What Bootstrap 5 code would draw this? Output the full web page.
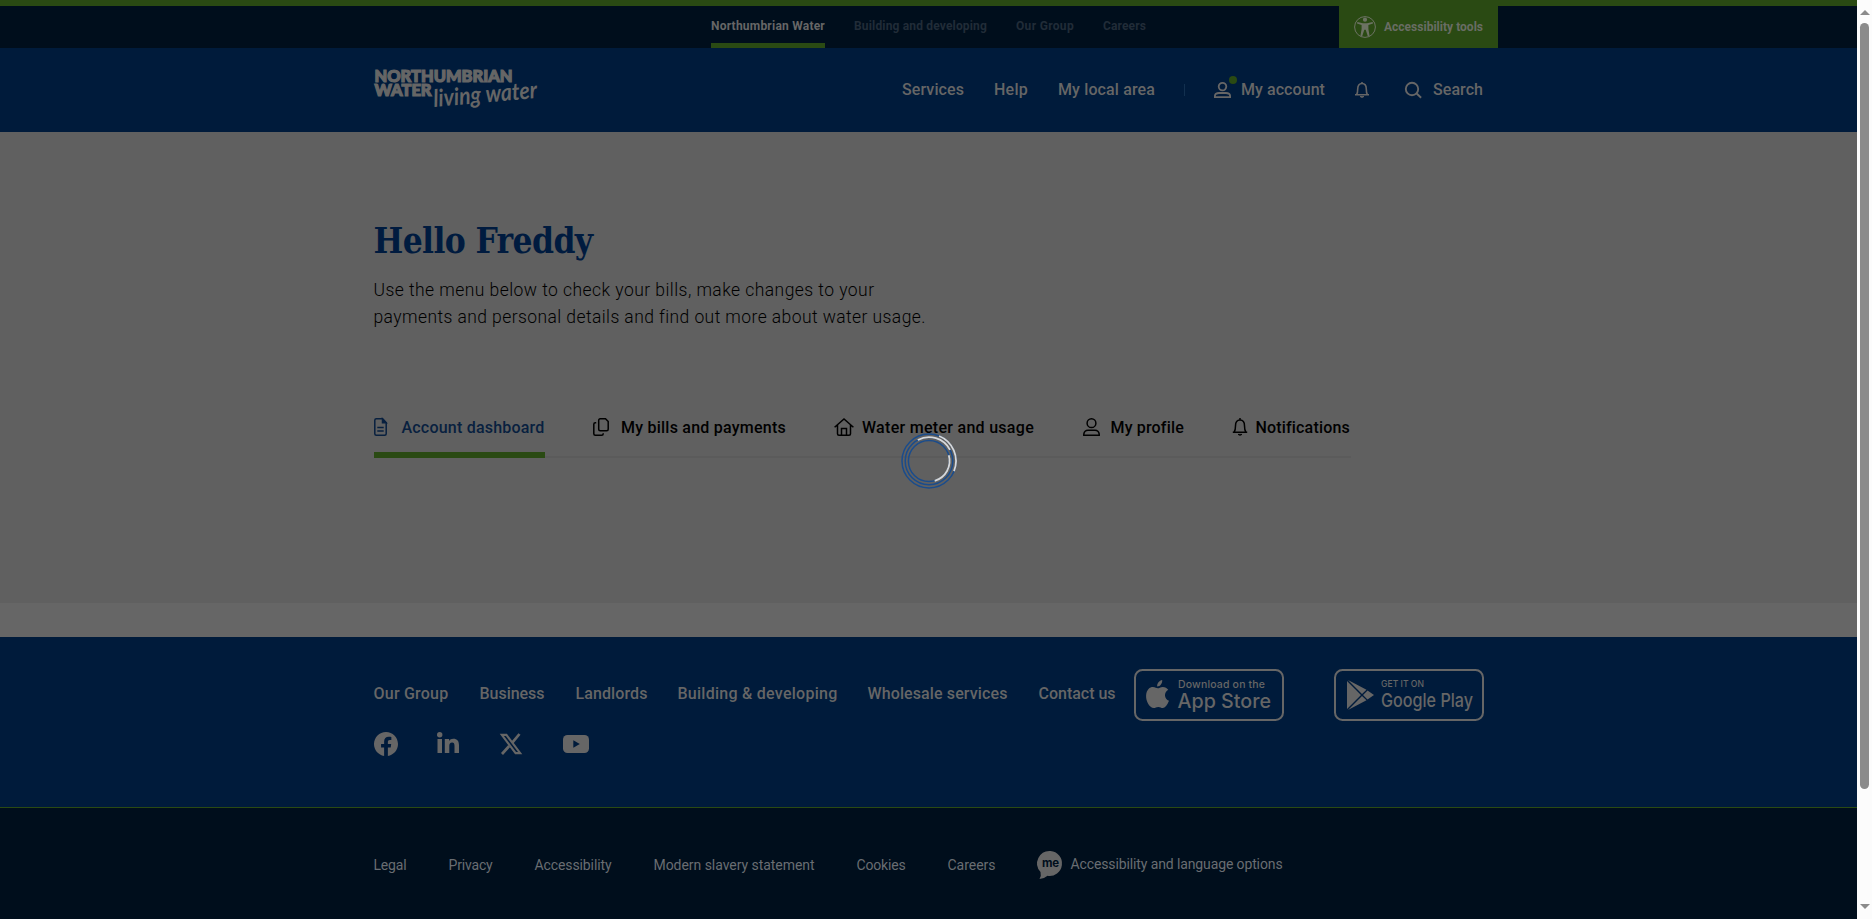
<!DOCTYPE html>
<html lang="en">
<head>
<meta charset="utf-8">
<meta name="viewport" content="width=device-width, initial-scale=1">
<title>Your account | Northumbrian Water</title>
<link href="https://cdn.jsdelivr.net/npm/bootstrap@5.3.0/dist/css/bootstrap.min.css" rel="stylesheet">
<style>
:root{--green:#2a4a13;--navy:#001b3b;--ink:#000e1c;--soft:#666}
html,body{height:919px;overflow:hidden}
body{font-family:Roboto,"Liberation Sans",sans-serif;font-size:16px;line-height:1.5;background:#666;color:#000}
a{color:inherit;text-decoration:none}
svg{display:block;flex:none;overflow:visible}
.page-col{width:1857px;height:919px;flex:none}
.wrap{width:1110px;margin-left:373.5px}
[data-w]{display:inline-block;white-space:nowrap}
.topbar{height:48px;background:var(--ink);border-top:6px solid var(--green);font-size:12px;font-weight:700}
.topbar nav{margin-left:711px;gap:29px;color:#212c38}
.topbar nav a{height:42px;line-height:40px}
.topbar nav a.active{color:var(--soft);border-bottom:5px solid var(--green)}
.tools{width:159px;height:42px;margin-left:193px;padding-left:15px;gap:8px;background:var(--green);color:#696d64}
.masthead{height:84px;background:var(--navy);color:var(--soft);font-weight:500}
.masthead .wrap{height:84px}
.sep{width:1px;height:12px;background:#12304f}
.dot{position:absolute;left:15px;top:-6px;width:8px;height:8px;border-radius:50%;background:var(--green)}
.hero{height:471px;background:#606060}
h1{font-family:"DejaVu Serif Condensed","DejaVu Serif",serif;font-stretch:condensed;font-size:35px;font-weight:700;line-height:42px;color:#001b3f;padding-top:88px;margin:0}
.intro{font-size:17.5px;font-weight:300;line-height:27px;margin-top:15px}
.tabs{width:977px;height:60px;margin-top:67px;border-bottom:2px solid #5b5b5b;font-weight:500}
.tabs a{height:60px;padding-top:18px;padding-bottom:9px}
.tabs a.active{color:#08203f;border-bottom:6px solid var(--green)}
.spin{position:absolute;left:901px;top:432.5px}
.foot{height:170px;margin-top:34px;background:var(--navy);color:var(--soft);font-weight:500}
.legal{height:112px;background:var(--ink);border-top:1px solid var(--green);color:#696d72;font-size:14px}
.legal a{line-height:20px}
.scroll-track{width:15px;background:#fcfcfc}
.thumb{width:9px;height:766px;border-radius:5px;background:#8b8b8b}
</style>
</head>
<body class="d-flex">
<div class="page-col">
  <header>
    <div class="topbar d-flex">
      <nav class="d-flex">
        <a class="active" href="#" data-w="114">Northumbrian Water</a>
        <a href="#" data-w="133">Building and developing</a>
        <a href="#" data-w="58">Our Group</a>
        <a href="#" data-w="43">Careers</a>
      </nav>
      <a href="#" class="tools d-flex align-items-center">
        <svg width="22" height="22" viewBox="0 0 22 22"><circle cx="11" cy="11" r="10.4" fill="none" stroke="#6c7263" stroke-width="1"/><g fill="#6c7263"><circle cx="11" cy="3.7" r="2.1"/><path d="M3.3 6.1 9 7.2h4l5.7-1.1.3 1.5-4.6 1.3v4l1.2 7-1.8.4-2.1-6.5h-1.4l-2.1 6.5-1.8-.4 1.2-7v-4L3 7.600z"/></g></svg>
        <span data-w="99">Accessibility tools</span>
      </a>
    </div>
    <div class="masthead">
      <div class="wrap d-flex align-items-center">
        <svg width="166" height="46" viewBox="0 0 166 46" fill="#666">
          <g font-family="Lato" font-weight="900" font-size="16" stroke="#666" stroke-width="1.200">
            <text x=".5" y="15" textLength="138" lengthAdjust="spacingAndGlyphs">NORTHUMBRIAN</text>
            <text x=".5" y="29" textLength="57" lengthAdjust="spacingAndGlyphs">WATER</text>
          </g>
          <text x="60" y="40" font-family="Lato" font-style="italic" font-weight="700" font-size="24" textLength="104" lengthAdjust="spacingAndGlyphs" transform="rotate(-5 60 40)">living water</text>
        </svg>
        <nav class="d-flex align-items-center" style="margin-left:362.500px">
          <a href="#" data-w="62">Services</a>
          <a href="#" data-w="34" style="margin-left:30px">Help</a>
          <a href="#" data-w="97" style="margin-left:30px">My local area</a>
          <span class="sep" style="margin-left:29px"></span>
          <a href="#" class="d-flex align-items-center" style="margin-left:29px">
            <span class="position-relative"><svg width="17" height="16" viewBox="0 0 17 16" fill="none" stroke="#666" stroke-width="1.8"><circle cx="8.500" cy="4.600" r="3.800"/><path d="M.9 15.100v-1.300Q1.200 11 5 11h7q3.800 0 4.100 2.800v1.300z"/></svg><span class="dot"></span></span>
            <span data-w="84" style="margin-left:10px">My account</span>
          </a>
          <a href="#" aria-label="Notifications" style="margin-left:30px"><svg width="14" height="16" viewBox="0 0 14 16" fill="none" stroke="#666" stroke-width="1.600"><path d="M7 0v1.500M0 12.700h14M1.700 12.300Q2.700 11 2.700 7c0-3.500 1.500-5.500 4.300-5.500s4.300 2 4.300 5.500q0 4 1 5.300"/><path d="M5 14.500q2 1.800 4 0z" fill="#666" stroke-width=".8"/></svg></a>
          <a href="#" class="d-flex align-items-center" style="margin-left:36px"><svg width="17" height="16" viewBox="0 0 17 16" fill="none" stroke="#666" stroke-width="1.900"><circle cx="7" cy="7" r="6.200"/><path d="m11.400 11.200 4.700 4.500"/></svg><span data-w="50" style="margin-left:11px">Search</span></a>
        </nav>
      </div>
    </div>
  </header>

  <main class="hero">
    <div class="wrap">
      <h1><span data-w="219">Hello Freddy</span></h1>
      <p class="intro mb-0"><span data-w="501">Use the menu below to check your bills, make changes to your</span><br><span data-w="552">payments and personal details and find out more about water usage.</span></p>
      <div class="tabs d-flex">
        <a class="active d-flex" href="#"><svg width="13" height="18" viewBox="0 0 13 18" style="margin-top:2px" fill="none" stroke="#08203f" stroke-width="1.500"><path d="M8.500.8H2.300Q.8.800.8 2.300v13.400q0 1.500 1.500 1.500h8.400q1.500 0 1.500-1.500V4.800z"/><path d="M8.500.8v4h3.700z" fill="#08203f"/><path d="M3.300 9.500h6.400M3.300 13h6.400"/></svg><span data-w="143" style="margin-left:15px">Account dashboard</span></a>
        <a class="d-flex" href="#" style="margin-left:48px"><svg width="16" height="18" viewBox="0 0 16 18" style="margin-top:2px" fill="none" stroke="#000" stroke-width="1.500"><path d="M7.200.8h5.300l2.700 2.700v7.800q0 1.500-1.500 1.500H7.200q-1.500 0-1.500-1.500v-9Q5.700.8 7.200.8zM3.200 4.800h-.9Q.8 4.800.8 6.300v9.400q0 1.500 1.500 1.500h6.400q1.500 0 1.500-1.500v-.5"/></svg><span data-w="165" style="margin-left:12.500px">My bills and payments</span></a>
        <a class="d-flex" href="#" style="margin-left:48px"><svg width="20" height="18" viewBox="0 0 20 18" style="margin-top:2px" fill="none" stroke="#000" stroke-width="1.500"><path d="M.6 9.200 10 .9l9.400 8.300M3.500 6.800v8.900q0 1.500 1.500 1.500h10q1.500 0 1.500-1.500V6.800M7.500 17v-6.500h5V17"/></svg><span data-w="172" style="margin-left:8px">Water meter and usage</span></a>
        <a class="d-flex" href="#" style="margin-left:48.500px"><svg width="17" height="18" viewBox="0 0 17 18" style="margin-top:2px" fill="none" stroke="#000" stroke-width="1.500"><circle cx="8.500" cy="5.200" r="4.400"/><path d="M.8 17.200v-1Q1.400 12.300 5 12.300h7q3.600 0 4.200 3.900v1z"/></svg><span data-w="73" style="margin-left:11px">My profile</span></a>
        <a class="d-flex" href="#" style="margin-left:48px"><svg width="16" height="18" viewBox="0 0 16 18" style="margin-top:2px" fill="none" stroke="#000" stroke-width="1.500"><path d="M8 0v2M.8 14.200h14.400M2.200 14Q3.500 12 3.500 7.800C3.500 4.200 5 2 8 2s4.500 2.200 4.500 5.800q0 4.200 1.300 6.200"/><path d="M6 16.400q2 1.800 4 0z" fill="#000" stroke-width=".8"/></svg><span data-w="94" style="margin-left:8px">Notifications</span></a>
      </div>
    </div>
  </main>

  <footer>
    <div class="foot">
      <div class="wrap d-flex">
        <div style="width:760.5px;padding-top:45px">
          <nav class="d-flex">
            <a href="#" data-w="75">Our Group</a>
            <a href="#" data-w="65" style="margin-left:31px">Business</a>
            <a href="#" data-w="72" style="margin-left:31px">Landlords</a>
            <a href="#" data-w="160" style="margin-left:30px">Building &amp; developing</a>
            <a href="#" data-w="140" style="margin-left:30px">Wholesale services</a>
            <a href="#" data-w="77" style="margin-left:31px">Contact us</a>
          </nav>
          <div class="d-flex align-items-center" style="margin-top:26px">
            <svg width="24" height="24" viewBox="0 0 16 16" fill="#666"><path d="M16 8.049c0-4.446-3.582-8.050-8-8.050C3.580 0-.002 3.603-.002 8.050c0 4.017 2.926 7.347 6.750 7.951v-5.625h-2.030V8.050H6.750V6.275c0-2.017 1.195-3.131 3.022-3.131.876 0 1.791.157 1.791.157v1.980h-1.009c-.993 0-1.303.621-1.303 1.258v1.510h2.218l-.354 2.326H9.250V16c3.824-.604 6.750-3.934 6.750-7.951"/></svg>
            <svg width="22" height="22" viewBox="0 0 22 22" fill="#666" style="margin-left:39px;margin-bottom:2px"><circle cx="2.700" cy="2.700" r="2.700"/><path d="M.5 7H5v14H.5zM7.800 7h4.300v2c.8-1.500 2.200-2.300 4.200-2.300 4 0 5.700 2.300 5.700 6.300v8h-4.500v-7.200c0-2.200-.6-3.400-2.400-3.400-2 0-2.800 1.400-2.800 3.500V21H7.800z"/></svg>
            <svg width="22" height="20" viewBox="0 0 22 20" style="margin-left:41px" fill="none" stroke="#666"><path d="M1.800.9h4.600l13.800 18.200h-4.600z" stroke-width="2.100"/><path d="M19.500 0 12.300 8.700M9.200 12 2 20" stroke-width="2.700"/></svg>
            <svg width="26" height="18" viewBox="0 0 26 18" style="margin-left:41.500px"><rect width="26" height="18" rx="4.500" fill="#666"/><path d="m10.300 5.300 6.500 3.700-6.500 3.700z" fill="#001b3b"/></svg>
          </div>
        </div>
        <svg width="150" height="52" viewBox="0 0 150 52" style="margin-top:32px" fill="#666">
          <rect x="1" y="1" width="148" height="50" rx="7.500" fill="none" stroke="#666" stroke-width="2"/>
          <path transform="translate(12 11)" d="M16.200 0c.4 3.600-2.300 6.600-5 6.500-.4-3.200 2.200-6.100 5-6.500zM11.800 8.300c1.100 0 2.600-1.400 5-1.400 2.300 0 4.300 1.200 5.400 2.900-4.800 2.900-3.900 9.200.8 11-1.700 4.600-4 7.200-6.200 7.200-1.800 0-2.300-1.100-4.500-1.100s-2.800 1.100-4.500 1.100C3.400 28-.3 21 .1 15.200.5 9.600 3.900 7 6.900 7c2.200 0 3.700 1.300 4.900 1.300z"/>
          <text x="44" y="19" font-family="Inter" font-size="10.500" font-weight="500" textLength="87">Download on the</text>
          <text x="43.500" y="39" font-family="Inter" font-size="20" font-weight="500" textLength="93.500" lengthAdjust="spacingAndGlyphs">App Store</text>
        </svg>
        <svg width="150" height="52" viewBox="0 0 150 52" style="margin-top:32px;margin-left:49.500px" fill="#666">
          <rect x="1" y="1" width="148" height="50" rx="7.500" fill="none" stroke="#666" stroke-width="2"/>
          <path d="M13 12v28l14-14zM14 11l14 14 4.500-4.300zM14 41l14-14 4.500 4.300zM33.500 21.500 29 26l4.500 4.500 6.500-4.500z"/>
          <text x="47" y="18" font-family="Inter" font-size="9.500" font-weight="500" textLength="43" lengthAdjust="spacingAndGlyphs">GET IT ON</text>
          <text x="47" y="37.500" font-family="Inter" font-size="19" font-weight="500" textLength="92" lengthAdjust="spacingAndGlyphs">Google Play</text>
        </svg>
      </div>
    </div>
    <div class="legal">
      <nav class="wrap d-flex align-items-center" style="padding-top:43px">
        <a href="#" data-w="33">Legal</a>
        <a href="#" data-w="44" style="margin-left:42px">Privacy</a>
        <a href="#" data-w="77" style="margin-left:42px">Accessibility</a>
        <a href="#" data-w="161" style="margin-left:42px">Modern slavery statement</a>
        <a href="#" data-w="49" style="margin-left:42px">Cookies</a>
        <a href="#" data-w="48" style="margin-left:42px">Careers</a>
        <a href="#" class="d-flex" style="margin-left:42px"><svg width="25" height="28" viewBox="0 0 25 28"><path d="M12.500 0a12.500 12.500 0 1 1-3 24.800Q6 28 1.500 28q2-2.800 1-7A12.500 12.500 0 0 1 12.500 0z" fill="#666"/><text x="4" y="16" font-family="Inter" font-weight="700" font-size="11.500" fill="#000e1c" textLength="17">me</text></svg><span data-w="212" style="margin-left:8px;margin-top:3px">Accessibility and language options</span></a>
      </nav>
    </div>
  </footer>
</div>

<div class="scroll-track d-flex flex-column align-items-center">
  <svg width="10" height="6" viewBox="0 0 10 6" style="margin-top:10px"><path d="M5 0l5 5H0z" fill="#8b8b8b"/></svg>
  <div class="thumb" style="margin-top:7px"></div>
  <svg width="10" height="6" viewBox="0 0 10 6" style="margin-top:115px"><path d="M0 0h10L5 5z" fill="#8b8b8b"/></svg>
</div>

<!-- loading spinner: three rings, each with a light quarter arc -->
<svg class="spin" width="56" height="56" viewBox="-28 -28 56 56" fill="none" stroke="#1a4c8c" stroke-width="1.500">
  <circle r="27"/><circle r="23.800"/><circle r="20.600"/>
  <g stroke="#d8d8d8" stroke-width="1.800"><path d="M10.100-25A27 27 0 0 1 25 10.100"/><path d="M-11.200-21A23.800 23.800 0 0 1 21-11.200"/><path d="M19.800-5.700A20.600 20.600 0 0 1 5.700 19.800"/></g>
</svg>

<script src="https://cdn.jsdelivr.net/npm/bootstrap@5.3.0/dist/js/bootstrap.bundle.min.js"></script>
<script>
// Track each label so that it fills its own measure.
document.querySelectorAll('[data-w]').forEach(function (el) {
  var w = +el.dataset.w, n = el.textContent.length;
  el.style.letterSpacing = ((w - el.getBoundingClientRect().width) / n).toFixed(3) + 'px';
  el.style.width = w + 'px';
});
</script>
</body>
</html>
